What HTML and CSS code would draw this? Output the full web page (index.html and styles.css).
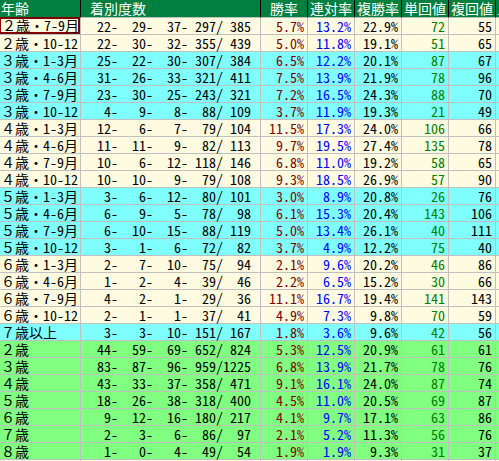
FILE: index.html
```html
<!DOCTYPE html>
<html lang="ja">
<head>
<meta charset="utf-8">
<title>年齢別成績</title>
<link rel="stylesheet" href="styles.css">
</head>
<body>
<div class="sheet">
  <div class="row head"><div class="c age">年齢</div><div class="c cnt">着別度数</div><div class="c">勝率</div><div class="c">連対率</div><div class="c">複勝率</div><div class="c">単回値</div><div class="c">複回値</div><div class="c ext">上</div></div>
  <div class="row cream"><div class="c age"><span class="sel">２歳・<span class="hw">7-9</span>月</span></div><div class="c cnt">  22-  29-  37- 297/ 385</div><div class="c win">5.7%</div><div class="c ren">13.2%</div><div class="c fuk">22.9%</div><div class="c tan">72</div><div class="c fkv">55</div><div class="c ext"></div></div>
  <div class="row cream"><div class="c age">２歳・<span class="hw">10-12</span></div><div class="c cnt">  22-  30-  32- 355/ 439</div><div class="c win">5.0%</div><div class="c ren">11.8%</div><div class="c fuk">19.1%</div><div class="c tan">51</div><div class="c fkv">65</div><div class="c ext"></div></div>
  <div class="row cyan"><div class="c age">３歳・<span class="hw">1-3</span>月</div><div class="c cnt">  25-  22-  30- 307/ 384</div><div class="c win">6.5%</div><div class="c ren">12.2%</div><div class="c fuk">20.1%</div><div class="c tan">87</div><div class="c fkv">67</div><div class="c ext"></div></div>
  <div class="row cyan"><div class="c age">３歳・<span class="hw">4-6</span>月</div><div class="c cnt">  31-  26-  33- 321/ 411</div><div class="c win">7.5%</div><div class="c ren">13.9%</div><div class="c fuk">21.9%</div><div class="c tan">78</div><div class="c fkv">96</div><div class="c ext"></div></div>
  <div class="row cyan"><div class="c age">３歳・<span class="hw">7-9</span>月</div><div class="c cnt">  23-  30-  25- 243/ 321</div><div class="c win">7.2%</div><div class="c ren">16.5%</div><div class="c fuk">24.3%</div><div class="c tan">88</div><div class="c fkv">70</div><div class="c ext"></div></div>
  <div class="row cyan"><div class="c age">３歳・<span class="hw">10-12</span></div><div class="c cnt">   4-   9-   8-  88/ 109</div><div class="c win">3.7%</div><div class="c ren">11.9%</div><div class="c fuk">19.3%</div><div class="c tan">21</div><div class="c fkv">49</div><div class="c ext"></div></div>
  <div class="row cream"><div class="c age">４歳・<span class="hw">1-3</span>月</div><div class="c cnt">  12-   6-   7-  79/ 104</div><div class="c win">11.5%</div><div class="c ren">17.3%</div><div class="c fuk">24.0%</div><div class="c tan">106</div><div class="c fkv">66</div><div class="c ext"></div></div>
  <div class="row cream"><div class="c age">４歳・<span class="hw">4-6</span>月</div><div class="c cnt">  11-  11-   9-  82/ 113</div><div class="c win">9.7%</div><div class="c ren">19.5%</div><div class="c fuk">27.4%</div><div class="c tan">135</div><div class="c fkv">78</div><div class="c ext"></div></div>
  <div class="row cream"><div class="c age">４歳・<span class="hw">7-9</span>月</div><div class="c cnt">  10-   6-  12- 118/ 146</div><div class="c win">6.8%</div><div class="c ren">11.0%</div><div class="c fuk">19.2%</div><div class="c tan">58</div><div class="c fkv">65</div><div class="c ext"></div></div>
  <div class="row cream"><div class="c age">４歳・<span class="hw">10-12</span></div><div class="c cnt">  10-  10-   9-  79/ 108</div><div class="c win">9.3%</div><div class="c ren">18.5%</div><div class="c fuk">26.9%</div><div class="c tan">57</div><div class="c fkv">90</div><div class="c ext"></div></div>
  <div class="row cyan"><div class="c age">５歳・<span class="hw">1-3</span>月</div><div class="c cnt">   3-   6-  12-  80/ 101</div><div class="c win">3.0%</div><div class="c ren">8.9%</div><div class="c fuk">20.8%</div><div class="c tan">26</div><div class="c fkv">76</div><div class="c ext"></div></div>
  <div class="row cyan"><div class="c age">５歳・<span class="hw">4-6</span>月</div><div class="c cnt">   6-   9-   5-  78/  98</div><div class="c win">6.1%</div><div class="c ren">15.3%</div><div class="c fuk">20.4%</div><div class="c tan">143</div><div class="c fkv">106</div><div class="c ext"></div></div>
  <div class="row cyan"><div class="c age">５歳・<span class="hw">7-9</span>月</div><div class="c cnt">   6-  10-  15-  88/ 119</div><div class="c win">5.0%</div><div class="c ren">13.4%</div><div class="c fuk">26.1%</div><div class="c tan">40</div><div class="c fkv">111</div><div class="c ext"></div></div>
  <div class="row cyan"><div class="c age">５歳・<span class="hw">10-12</span></div><div class="c cnt">   3-   1-   6-  72/  82</div><div class="c win">3.7%</div><div class="c ren">4.9%</div><div class="c fuk">12.2%</div><div class="c tan">75</div><div class="c fkv">40</div><div class="c ext"></div></div>
  <div class="row cream"><div class="c age">６歳・<span class="hw">1-3</span>月</div><div class="c cnt">   2-   7-  10-  75/  94</div><div class="c win">2.1%</div><div class="c ren">9.6%</div><div class="c fuk">20.2%</div><div class="c tan">46</div><div class="c fkv">86</div><div class="c ext"></div></div>
  <div class="row cream"><div class="c age">６歳・<span class="hw">4-6</span>月</div><div class="c cnt">   1-   2-   4-  39/  46</div><div class="c win">2.2%</div><div class="c ren">6.5%</div><div class="c fuk">15.2%</div><div class="c tan">30</div><div class="c fkv">66</div><div class="c ext"></div></div>
  <div class="row cream"><div class="c age">６歳・<span class="hw">7-9</span>月</div><div class="c cnt">   4-   2-   1-  29/  36</div><div class="c win">11.1%</div><div class="c ren">16.7%</div><div class="c fuk">19.4%</div><div class="c tan">141</div><div class="c fkv">143</div><div class="c ext"></div></div>
  <div class="row cream"><div class="c age">６歳・<span class="hw">10-12</span></div><div class="c cnt">   2-   1-   1-  37/  41</div><div class="c win">4.9%</div><div class="c ren">7.3%</div><div class="c fuk">9.8%</div><div class="c tan">70</div><div class="c fkv">59</div><div class="c ext"></div></div>
  <div class="row cyan"><div class="c age">７歳以上</div><div class="c cnt">   3-   3-  10- 151/ 167</div><div class="c win">1.8%</div><div class="c ren">3.6%</div><div class="c fuk">9.6%</div><div class="c tan">42</div><div class="c fkv">56</div><div class="c ext"></div></div>
  <div class="row green"><div class="c age">２歳</div><div class="c cnt">  44-  59-  69- 652/ 824</div><div class="c win">5.3%</div><div class="c ren">12.5%</div><div class="c fuk">20.9%</div><div class="c tan">61</div><div class="c fkv">61</div><div class="c ext"></div></div>
  <div class="row green"><div class="c age">３歳</div><div class="c cnt">  83-  87-  96- 959/1225</div><div class="c win">6.8%</div><div class="c ren">13.9%</div><div class="c fuk">21.7%</div><div class="c tan">78</div><div class="c fkv">76</div><div class="c ext"></div></div>
  <div class="row green"><div class="c age">４歳</div><div class="c cnt">  43-  33-  37- 358/ 471</div><div class="c win">9.1%</div><div class="c ren">16.1%</div><div class="c fuk">24.0%</div><div class="c tan">87</div><div class="c fkv">74</div><div class="c ext"></div></div>
  <div class="row green"><div class="c age">５歳</div><div class="c cnt">  18-  26-  38- 318/ 400</div><div class="c win">4.5%</div><div class="c ren">11.0%</div><div class="c fuk">20.5%</div><div class="c tan">69</div><div class="c fkv">87</div><div class="c ext"></div></div>
  <div class="row green"><div class="c age">６歳</div><div class="c cnt">   9-  12-  16- 180/ 217</div><div class="c win">4.1%</div><div class="c ren">9.7%</div><div class="c fuk">17.1%</div><div class="c tan">63</div><div class="c fkv">86</div><div class="c ext"></div></div>
  <div class="row green"><div class="c age">７歳</div><div class="c cnt">   2-   3-   6-  86/  97</div><div class="c win">2.1%</div><div class="c ren">5.2%</div><div class="c fuk">11.3%</div><div class="c tan">56</div><div class="c fkv">76</div><div class="c ext"></div></div>
  <div class="row green"><div class="c age">８歳</div><div class="c cnt">   1-   0-   4-  49/  54</div><div class="c win">1.9%</div><div class="c ren">1.9%</div><div class="c fuk">9.3%</div><div class="c tan">31</div><div class="c fkv">37</div><div class="c ext"></div></div>
  <div class="row cream"><div class="c age"></div><div class="c cnt"></div><div class="c win"></div><div class="c ren"></div><div class="c fuk"></div><div class="c tan"></div><div class="c fkv"></div><div class="c ext"></div></div>
</div>
</body>
</html>
```

FILE: styles.css
```css
html, body {
  margin: 0;
  padding: 0;
  overflow: hidden;
  background: #ffffff;
}

.sheet {
  width: 540px;
  font-family: "Noto Sans CJK JP", sans-serif;
  font-size: 14px;
  color: #000000;
}

.row {
  display: grid;
  grid-template-columns: 81px 180px repeat(5, 47px) 45px;
  height: 17px;
}

.c {
  box-sizing: border-box;
  border-right: 1px solid #c0c0c0;
  border-bottom: 1px solid #c0c0c0;
  line-height: 16px;
  white-space: pre;
  text-align: right;
  padding-right: 3px;
  font-feature-settings: "hwid" 1;
}

.head {
  height: 18px;
}

.head .c {
  line-height: 17px;
  background: #007f3f;
  color: #ffffff;
  border-right-color: #000000;
  text-align: center;
  padding: 0;
  font-feature-settings: normal;
}

.head .age {
  text-align: left;
  padding-left: 1px;
}

.head .cnt {
  text-align: left;
  padding-left: 9px;
}

.head .ext {
  text-align: left;
  padding-left: 1px;
}

.age {
  text-align: left;
  padding-left: 1px;
  padding-right: 0;
  font-feature-settings: normal;
}

.age .hw {
  font-feature-settings: "hwid" 1;
}

.cnt {
  padding-right: 9px;
}

.cream .c { background: #fffbe0; }
.cyan .c { background: #80ffff; }
.green .c { background: #80ff80; }

.win { color: #800000; }
.ren { color: #0000ff; }
.fuk { color: #000000; }
.tan { color: #008000; }
.fkv { color: #000000; }

.sel {
  display: block;
  height: 17px;
  margin: -1px 0 0 -1px;
  padding-left: 1px;
  border: 1px solid #800000;
  border-width: 2px 2px 2px 1px;
  box-sizing: border-box;
  line-height: 13px;
}
```
